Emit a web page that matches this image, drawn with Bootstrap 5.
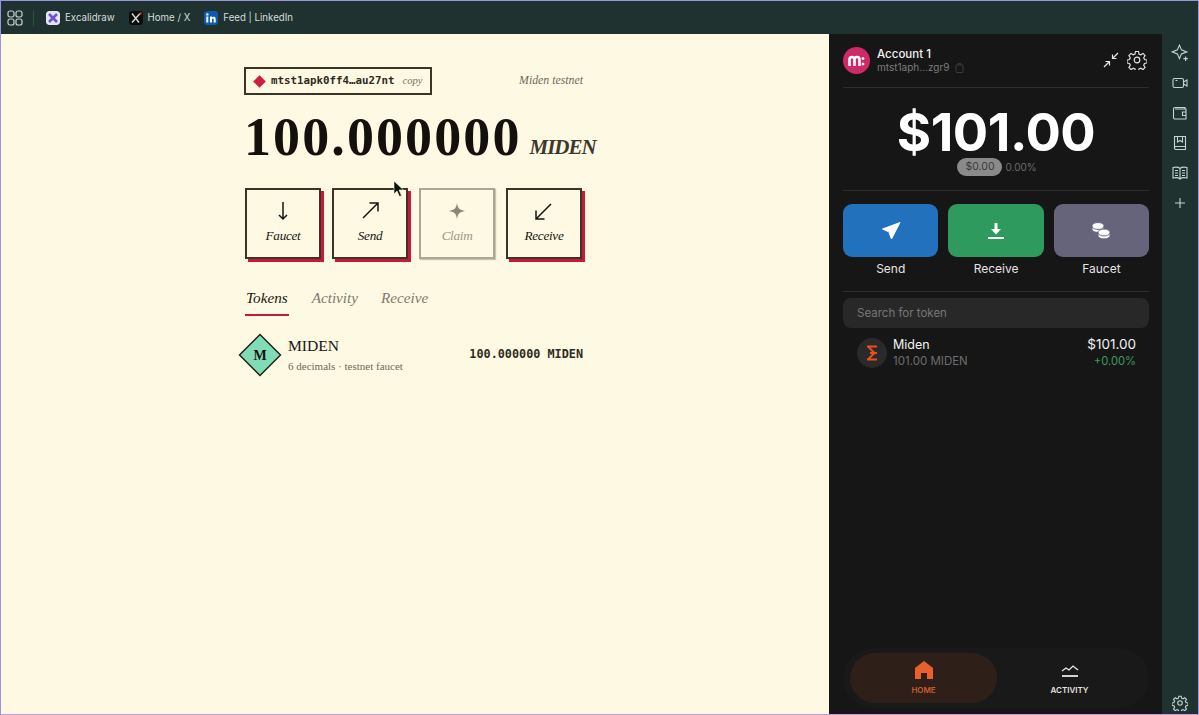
<!DOCTYPE html>
<html lang="en">
<head>
<meta charset="UTF-8">
<title>Miden wallet</title>
<link href="https://cdn.jsdelivr.net/npm/bootstrap@5.3.0/dist/css/bootstrap.min.css" rel="stylesheet">
<style>
html, body { height: 100%; overflow: hidden; }
body { background: #20322f; font-family: Inter, sans-serif; }
.app-shell { height: 715px; border: 1px solid #9a96dc; border-bottom-color: #c79ad0; position: relative; }
.top-strip { height: 33px; background: #20322f; color: #d5dcd9; font-size: 9.7px; padding-left: 6px; padding-top: 1px; }
.top-sep { width: 1px; height: 16px; background: #394a47; margin: 0 12px 0 10px; }
.fav { width: 14px; height: 14px; border-radius: 3px; margin-right: 5px; }
.tab-link { margin-right: 14px; }
.paper { width: 829px; background: #fdf9e3; color: #181510; font-family: "Liberation Serif", serif; }
.paper-col { width: 339px; margin-left: 243px; padding-top: 33px; }
.addr-box { width: 188px; height: 28px; border: 2px solid #3a3528; padding-left: 7px; }
.addr-mark { width: 9px; height: 9px; background: #cf1f3c; transform: rotate(45deg); margin-left: 2px; margin-right: 7px; flex: none; }
.addr-text { font-family: "DejaVu Sans Mono", monospace; font-size: 10.8px; font-weight: 700; color: #2f2b20; }
.addr-copy { font-style: italic; font-size: 10.5px; color: #77705f; margin-left: 8px; }
.net-name { font-style: italic; font-size: 11.8px; color: #6f6a5b; }
.bal-row { margin-top: 16px; height: 52px; }
.bal-num { font-size: 54px; line-height: 52px; font-weight: 700; letter-spacing: 2.1px; color: #14110c; }
.bal-unit { font-size: 21px; font-weight: 700; font-style: italic; color: #3c382c; margin-left: 8px; letter-spacing: -1px; }
.act-row { margin-top: 25px; gap: 11px; padding-left: 1px; }
.act-btn { width: 76px; height: 71px; border: 2px solid #3a3528; box-shadow: 3px 3px 0 #c8193a; font-style: italic; font-size: 13.2px; letter-spacing: -.3px; color: #181510; }
.act-btn svg { margin-top: 10px; margin-bottom: 4px; }
.act-off { border-color: #aca795; box-shadow: 1px 1px 1px #c9c4ae; color: #9b9686; }
.tab-row { margin-top: 28px; gap: 23px; padding-left: 2px; font-style: italic; font-size: 15.2px; color: #807a6a; }
.tab-item { padding-bottom: 6px; line-height: 21px; }
.tab-on { color: #1a170f; border-bottom: 2px solid #c8193a; margin-left: -1px; padding: 0 1px 6px 1px; }
.tok-row { margin-top: 17px; margin-left: -6px; }
.tok-dia { width: 44px; height: 44px; margin-right: 6px; }
.tok-name { font-size: 15.6px; line-height: 19px; }
.tok-sub { font-size: 11px; line-height: 15px; color: #6f6a5b; margin-top: 4px; }
.tok-amt { font-family: "DejaVu Sans Mono", monospace; font-size: 11.8px; font-weight: 700; color: #2f2b20; }
.wallet { width: 333px; background: #161616; color: #f2f2f2; padding: 0 13px 0 14px; font-family: Inter, sans-serif; }
.w-head { height: 53px; }
.w-ava { width: 27px; height: 27px; border-radius: 50%; background: #cf2a68; margin-right: 7px; }
.w-name { font-size: 11.5px; font-weight: 500; line-height: 14px; }
.w-addr { font-size: 10px; line-height: 13px; color: #7c7c7c; }
.w-copy { margin-left: 6px; }
.w-tool { margin-bottom: 2px; }
.w-gear { margin-right: 2px; }
.w-line { height: 1px; background: #2e2e2e; }
.w-total { font-size: 52.5px; font-weight: 700; line-height: 52px; margin-top: 18px; letter-spacing: -.5px; color: #fff; }
.w-pill { background: #8a8a8a; color: #3a3a3a; font-size: 10.5px; height: 18px; width: 45px; border-radius: 9px; }
.w-pct { font-size: 10px; color: #6c6c6c; margin-left: 3px; }
.w-change { height: 18px; margin-bottom: 14px; padding-left: 2px; }
.w-acts { gap: 10px; margin-top: 13px; }
.w-act { width: 96px; font-size: 12px; line-height: 14px; color: #e4e4e4; }
.w-tile { height: 53px; border-radius: 9px; margin-bottom: 5px; }
.tile-blue { background: #2271bd; }
.tile-green { background: #2e9a5d; }
.tile-grey { background: #66647a; }
.w-rule2 { margin-top: 15px; }
.w-search { height: 30px; border-radius: 8px; background: #282828; color: #777; font-size: 11.5px; padding: 2px 0 0 14px; margin-top: 6px; }
.w-tok { padding: 8px 13px 0 14px; }
.w-icon { width: 30px; height: 30px; border-radius: 50%; background: #2a2a2a; margin-right: 6px; }
.w-t1 { font-size: 12.5px; line-height: 17px; }
.w-t2 { font-size: 11.5px; line-height: 16px; color: #6d6d6d; }
.w-val { font-size: 13.5px; }
.w-gain { color: #3f9a5f; font-size: 11.2px; }
.w-nav { height: 60px; margin-bottom: 6px; border-radius: 30px; background: #191919; padding: 0 7px; font-size: 8px; font-weight: 600; }
.w-nav-on { width: 147px; height: 50px; border-radius: 25px; background: #2e2019; color: #cf5a30; }
.w-nav-off { width: 145px; color: #e4e4e4; }
.side-rail { width: 36px; color: #c6d3cd; padding-top: 3px; padding-bottom: 2px; }
.rail-slot { height: 30px; }
.rail-first { height: 31px; }
.rail-end { height: 18px; }
.ptr { position: absolute; left: 392px; top: 179px; }
</style>
</head>
<body>
<div class="app-shell d-flex flex-column">
  <div class="top-strip d-flex align-items-center">
    <svg width="16" height="16" viewBox="0 0 16 16" fill="none" stroke="#c9d2cf" stroke-width="1.2"><rect x="1" y="1" width="6" height="6" rx="2"/><rect x="9" y="1" width="6" height="6" rx="2"/><rect x="1" y="9" width="6" height="6" rx="2"/><rect x="9" y="9" width="6" height="6" rx="2"/></svg>
    <div class="top-sep"></div>
    <svg class="fav" viewBox="0 0 14 14"><rect width="14" height="14" rx="3" fill="#e6e4f8"/><path d="M3 3l8 8M11 3l-8 8" stroke="#6a55d0" stroke-width="2.6"/></svg>
    <span class="tab-link">Excalidraw</span>
    <svg class="fav" viewBox="0 0 14 14"><rect width="14" height="14" rx="2" fill="#0c0c0c"/><path d="M3 2.5l7 9M11 2.5l-8 9" stroke="#d9d9d9" stroke-width="1.4"/><circle cx="11.5" cy="2.5" r="1.2" fill="#d8332e"/></svg>
    <span class="tab-link">Home / X</span>
    <svg class="fav" viewBox="0 0 14 14"><rect width="14" height="14" rx="2" fill="#0d5cac"/><rect x="2.3" y="5.5" width="2" height="6" fill="#fff"/><circle cx="3.3" cy="3.4" r="1.2" fill="#fff"/><path d="M6 11.5v-6h2v1c.6-1 3.7-1.6 3.7 1.4v3.6h-2V8.4c0-1.400-1.700-1.200-1.700 0v3.100z" fill="#fff"/></svg>
    <span>Feed | LinkedIn</span>
  </div>
  <div class="d-flex flex-grow-1">
    <div class="paper">
      <div class="paper-col">
        <div class="d-flex justify-content-between align-items-center">
          <div class="addr-box d-flex align-items-center">
            <span class="addr-mark"></span><span class="addr-text">mtst1apk0ff4…au27nt</span><span class="addr-copy">copy</span>
          </div>
          <span class="net-name">Miden testnet</span>
        </div>
        <div class="bal-row d-flex align-items-end">
          <span class="bal-num">100.000000</span><span class="bal-unit">MIDEN</span>
        </div>
        <div class="act-row d-flex">
          <div class="act-btn d-flex flex-column align-items-center">
            <svg width="22" height="22" viewBox="0 0 22 22" fill="none" stroke="#181510" stroke-width="1.5"><path d="M11 2v17M7 15l4 4 4-4"/></svg>Faucet
          </div>
          <div class="act-btn d-flex flex-column align-items-center">
            <svg width="22" height="22" viewBox="0 0 22 22" fill="none" stroke="#181510" stroke-width="1.5"><path d="M4 18L19 3M10.500 3H19v8.500"/></svg>Send
          </div>
          <div class="act-btn act-off d-flex flex-column align-items-center">
            <svg width="22" height="22" viewBox="0 0 22 22" fill="#8c8778"><path d="M11 3c1 5.500 2.500 7 8 8-5.500 1-7 2.500-8 8-1-5.500-2.500-7-8-8 5.500-1 7-2.500 8-8z"/></svg>Claim
          </div>
          <div class="act-btn d-flex flex-column align-items-center">
            <svg width="22" height="22" viewBox="0 0 22 22" fill="none" stroke="#181510" stroke-width="1.5"><path d="M18 4L3 19M3 10.500V19h8.500"/></svg>Receive
          </div>
        </div>
        <div class="tab-row d-flex">
          <span class="tab-item tab-on">Tokens</span><span class="tab-item">Activity</span><span class="tab-item">Receive</span>
        </div>
        <div class="tok-row d-flex align-items-center">
          <svg class="tok-dia" viewBox="0 0 44 44"><path d="M22 1.500L42.500 22 22 42.500 1.500 22z" fill="#7fdcb4" stroke="#1f1c14" stroke-width="1.400"/><text x="22" y="27" text-anchor="middle" font-family="Liberation Serif" font-weight="700" font-size="14" fill="#14110c">M</text></svg>
          <div class="flex-grow-1">
            <div class="tok-name">MIDEN</div>
            <div class="tok-sub">6 decimals · testnet faucet</div>
          </div>
          <span class="tok-amt">100.000000 MIDEN</span>
        </div>
      </div>
    </div>
    <div class="wallet d-flex flex-column">
      <div class="w-head d-flex align-items-center">
        <div class="w-ava d-flex align-items-center justify-content-center"><svg width="17" height="11" viewBox="0 0 17 11" fill="none" stroke="#fff" stroke-width="2.600"><path d="M1.500 11V4.500a2.500 2.500 0 0 1 5 0V11M6.500 4.500a2.500 2.500 0 0 1 5 0V11"/><circle cx="15" cy="3.500" r="1" fill="#fff" stroke-width="1"/><circle cx="15" cy="9" r="1" fill="#fff" stroke-width="1"/></svg></div>
        <div class="flex-grow-1">
          <div class="w-name">Account 1</div>
          <div class="w-addr d-flex align-items-center">mtst1aph...zgr9<svg class="w-copy" width="9" height="10" viewBox="0 0 9 10" fill="none" stroke="#3c3c3c"><rect x="1" y="2" width="7" height="7.500" rx="1"/><path d="M3 2V.7h3V2"/></svg></div>
        </div>
        <svg width="16" height="16" viewBox="0 0 16 16" fill="none" stroke="#e8e8e8" stroke-width="1.2" class="me-2 w-tool"><path d="M15 1L9.500 6.500M9.500 2.500v4h4M1 15l5.500-5.500M2.500 9.500h4v4"/></svg>
        <svg class="w-gear w-tool" width="20" height="20" viewBox="0 0 20 20" fill="none" stroke="#e0e0e0" stroke-width="1.200"><circle cx="10" cy="10" r="2.800"/><path d="M8.500 1.500h3l.5 2.500 1.800.8 2.200-1.400 2.100 2.100-1.400 2.200.8 1.800 2.500.5v3l-2.500.5-.8 1.800 1.400 2.200-2.100 2.100-2.200-1.400-1.800.8-.5 2.500h-3l-.5-2.500-1.800-.8-2.200 1.400-2.100-2.100 1.400-2.200-.8-1.800-2.500-.5v-3l2.500-.5.800-1.800-1.400-2.200 2.100-2.100 2.200 1.400 1.800-.8z"/></svg>
      </div>
      <div class="w-line"></div>
      <div class="w-total text-center">$101.00</div>
      <div class="w-change d-flex justify-content-center align-items-center">
        <span class="w-pill d-flex align-items-center justify-content-center">$0.00</span><span class="w-pct">0.00%</span>
      </div>
      <div class="w-line"></div>
      <div class="w-acts d-flex">
        <div class="w-act text-center">
          <div class="w-tile tile-blue d-flex align-items-center justify-content-center"><svg width="22" height="22" viewBox="0 0 22 22" fill="#fff" stroke="#fff" stroke-linejoin="round"><path d="M20 2.500L2.500 9l5.500 2.500 2-1-1 2L11.500 19z"/></svg></div>Send
        </div>
        <div class="w-act text-center">
          <div class="w-tile tile-green d-flex align-items-center justify-content-center"><svg width="18" height="18" viewBox="0 0 18 18" fill="#fff"><path d="M7.500 1h3v6h3.500L9 12.500 4 7h3.500zM1 15h16v2H1z"/></svg></div>Receive
        </div>
        <div class="w-act text-center">
          <div class="w-tile tile-grey d-flex align-items-center justify-content-center"><svg width="20" height="18" viewBox="0 0 20 18" stroke="#66647a" fill="#fff"><path d="M1 4c0-1.900 2.500-3.400 6-3.400s6 1.500 6 3.400v3c0 1.900-2.500 3.400-6 3.400s-6-1.500-6-3.400z"/><path d="M1 4c0 1.900 2.500 3.400 6 3.400S13 5.900 13 4" fill="none"/><path d="M7 10.500c0-1.900 2.500-3.400 6-3.400s6 1.500 6 3.400v3c0 1.900-2.500 3.400-6 3.400s-6-1.500-6-3.400z"/><path d="M7 10.500c0 1.900 2.500 3.400 6 3.400s6-1.500 6-3.400" fill="none"/></svg></div>Faucet
        </div>
      </div>
      <div class="w-line w-rule2"></div>
      <div class="w-search d-flex align-items-center">Search for token</div>
      <div class="w-tok d-flex align-items-center">
        <div class="w-icon d-flex align-items-center justify-content-center"><svg width="14" height="18" viewBox="0 0 14 18" fill="none" stroke="#e8501e" stroke-width="2"><path d="M2 2.500h10M2 15.500h10M3 2.500l6.500 6.500L3 15.500M5 9h7"/></svg></div>
        <div class="flex-grow-1">
          <div class="w-t1">Miden</div>
          <div class="w-t2">101.00 MIDEN</div>
        </div>
        <div class="text-end">
          <div class="w-t1 w-val">$101.00</div>
          <div class="w-t2 w-gain">+0.00%</div>
        </div>
      </div>
      <div class="flex-grow-1"></div>
      <div class="w-nav d-flex align-items-center">
        <div class="w-nav-on d-flex flex-column align-items-center justify-content-center">
          <svg width="20" height="20" viewBox="0 0 20 20" fill="#e8602e"><path d="M10 1L1 8v11h6v-6h6v6h6V8z"/></svg><span class="mt-1">HOME</span>
        </div>
        <div class="w-nav-off d-flex flex-column align-items-center justify-content-center">
          <svg width="18" height="20" viewBox="0 0 18 20" fill="none" stroke="#e8e8e8" stroke-width="1.300"><path d="M1 11l4-3 3 2 4-4 5 4"/><path d="M1 16h16" stroke-width="1.800"/></svg><span class="mt-1">ACTIVITY</span>
        </div>
      </div>
    </div>
    <div class="side-rail d-flex flex-column align-items-center">
      <div class="rail-slot rail-first d-flex align-items-center"><svg width="18" height="18" viewBox="0 0 16 16" fill="none" stroke="currentColor" stroke-width="1"><path d="M7.500 1l1.800 4.200L14 7l-4.700 1.800L7.500 13 5.700 8.800 1 7l4.700-1.800z"/><path d="M13 11v4M11 13h4"/></svg></div>
      <div class="rail-slot d-flex align-items-center"><svg width="16" height="16" viewBox="0 0 16 16" fill="none" stroke="currentColor" stroke-width="1.100"><rect x="1" y="3.500" width="10.500" height="9" rx="1.500"/><path d="M11.500 7l3.500-2v6l-3.500-2"/><path d="M3.500 5.500h2"/></svg></div>
      <div class="rail-slot d-flex align-items-center"><svg width="16" height="16" viewBox="0 0 16 16" fill="none" stroke="currentColor" stroke-width="1.100"><path d="M13 4V2.500H3A1.500 1.500 0 0 0 1.500 4v8.500A1.500 1.500 0 0 0 3 14h11V4H3"/><path d="M14 7h-3.500v3.500H14"/></svg></div>
      <div class="rail-slot d-flex align-items-center"><svg width="16" height="16" viewBox="0 0 16 16" fill="none" stroke="currentColor" stroke-width="1.100"><path d="M2.500 12.500V1.500h11v13h-9.500a1.500 1.500 0 0 1-1.500-2 1.500 1.500 0 0 1 1.500-1h9.500"/><path d="M5.500 1.500v5.500l2.500-1.500L10.500 7V1.500"/></svg></div>
      <div class="rail-slot d-flex align-items-center"><svg width="16" height="16" viewBox="0 0 16 16" fill="none" stroke="currentColor" stroke-width="1.100"><path d="M8 3.500C6.500 2 3.500 2 1 2.500v10.500c2.500-.5 5.500-.5 7 1 1.500-1.500 4.500-1.500 7-1V2.500C12.500 2 9.500 2 8 3.500zM8 3.500V14M3 5.500h3M3 8h3M3 10.500h3M10 5.500h3M10 8h3M10 10.500h3"/></svg></div>
      <div class="rail-slot d-flex align-items-center"><svg width="12" height="12" viewBox="0 0 12 12" fill="none" stroke="currentColor" stroke-width="1.100"><path d="M6 1v10M1 6h10"/></svg></div>
      <div class="flex-grow-1"></div>
      <div class="rail-end d-flex align-items-center"><svg width="16" height="16" viewBox="0 0 20 20" fill="none" stroke="currentColor" stroke-width="1.400"><circle cx="10" cy="10" r="2.800"/><path d="M8.500 1.500h3l.5 2.500 1.800.8 2.200-1.400 2.100 2.100-1.400 2.200.8 1.800 2.500.5v3l-2.500.5-.8 1.800 1.400 2.200-2.100 2.100-2.200-1.400-1.800.8-.5 2.500h-3l-.5-2.500-1.800-.8-2.200 1.400-2.100-2.100 1.400-2.200-.8-1.800-2.500-.5v-3l2.500-.5.800-1.800-1.400-2.200 2.100-2.100 2.200 1.400 1.800-.8z"/></svg></div>
    </div>
  </div>
  <svg class="ptr" width="12" height="18" viewBox="0 0 12 18"><path d="M1 1v13l3-3 2.500 5.500 2-1L6 10h4.500z" fill="#111" stroke="#fdf9e3" stroke-width=".6"/></svg>
</div>
<script src="https://cdn.jsdelivr.net/npm/bootstrap@5.3.0/dist/js/bootstrap.bundle.min.js"></script>
</body>
</html>
